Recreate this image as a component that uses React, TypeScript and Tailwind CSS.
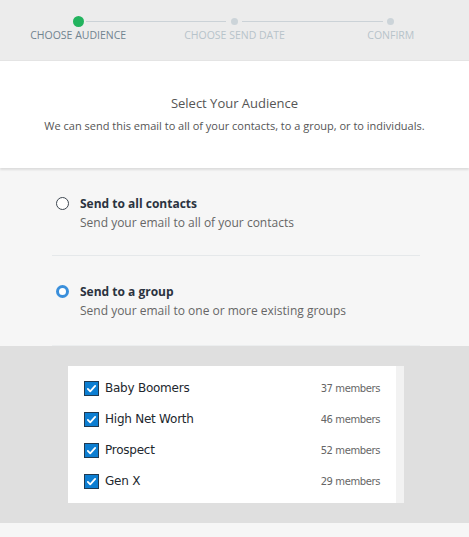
const steps = [
  { label: 'CHOOSE AUDIENCE', active: true },
  { label: 'CHOOSE SEND DATE', active: false },
  { label: 'CONFIRM', active: false },
]

const groups = [
  { name: 'Baby Boomers', members: 37 },
  { name: 'High Net Worth', members: 46 },
  { name: 'Prospect', members: 52 },
  { name: 'Gen X', members: 29 },
]

function Check() {
  return (
    <span className="flex h-[15px] w-[15px] items-center justify-center border border-[#1f3a52] bg-[#0c7ed2]">
      <svg width="11" height="11" viewBox="0 0 12 12">
        <path d="M2 6.5l2.6 2.6L10 3.2" fill="none" stroke="#fff" strokeWidth="2" strokeLinecap="round" strokeLinejoin="round" />
      </svg>
    </span>
  )
}

export default function App() {
  return (
    <div className="min-h-[537px] w-[469px] bg-[#f6f6f6] font-['Open_Sans',sans-serif]">
      {/* stepper */}
      <div className="grid h-[60px] grid-cols-3 bg-[#ececec] pt-4">
        {steps.map((s, i) => (
          <div key={s.label} className="relative flex flex-col items-center">
            <div className="flex h-[11px] items-center">
              {s.active ? (
                <span className="h-[11px] w-[11px] rounded-full bg-[#22b35e]" />
              ) : (
                <span className="h-[7px] w-[7px] rounded-full bg-[#ccd4d9]" />
              )}
            </div>
            {i < steps.length - 1 && (
              <span className="absolute left-[calc(50%+8px)] top-[5px] h-px w-[calc(100%-16px)] bg-[#cbd2d7]" />
            )}
            <span
              className={`mt-px text-[10.5px] leading-[14px] ${
                s.active ? 'text-[#70838f]' : 'text-[#b7c3ca]'
              }`}
            >
              {s.label}
            </span>
          </div>
        ))}
      </div>

      {/* heading */}
      <div className="border-t border-[#e4e4e4] bg-white pb-[34px] pt-[33px] text-center shadow-[0_2px_2px_rgba(0,0,0,0.1)]">
        <h1 className="text-[13px] text-[#555]">Select Your Audience</h1>
        <p className="mt-[4px] text-[11px] text-[#555]">
          We can send this email to all of your contacts, to a group, or to individuals.
        </p>
      </div>

      {/* options */}
      <div className="pl-[52px] pr-[49px]">
        <div className="flex gap-[11px] border-b border-[#e5e8ea] px-[4px] pb-[23px] pt-[27px]">
          <span className="mt-[2px] h-[13px] w-[13px] rounded-full border border-[#3d4650] bg-white" />
          <div>
            <div className="text-[12px] font-bold text-[#2b3340]">Send to all contacts</div>
            <div className="mt-[1px] text-[12px] text-[#666]">Send your email to all of your contacts</div>
          </div>
        </div>
        <div className="flex gap-[11px] border-b border-[#eceeef] px-[4px] pb-[25px] pt-[27px]">
          <span className="mt-[2px] h-[13px] w-[13px] rounded-full border-[3.5px] border-[#3a8fdb] bg-white" />
          <div>
            <div className="text-[12px] font-bold text-[#2b3340]">Send to a group</div>
            <div className="mt-[1px] text-[12px] text-[#666]">Send your email to one or more existing groups</div>
          </div>
        </div>
      </div>

      {/* groups */}
      <div className="bg-[#dfdfdf] px-[68px] py-[20px]">
        <div className="flex w-[336px] bg-white font-['DejaVu_Sans',sans-serif]">
          <ul className="flex-1 py-[6.5px] pl-[16px] pr-[16px]">
            {groups.map((g) => (
              <li key={g.name} className="flex h-[31px] items-center">
                <Check />
                <span className="ml-[6px] flex-1 text-[12px] tracking-[-0.02em] text-[#22272e]">{g.name}</span>
                <span className="text-[10px] tracking-[-0.04em] text-[#666]">{g.members} members</span>
              </li>
            ))}
          </ul>
          <div className="w-[8px] bg-[#f2f2f2]" />
        </div>
      </div>
    </div>
  )
}
